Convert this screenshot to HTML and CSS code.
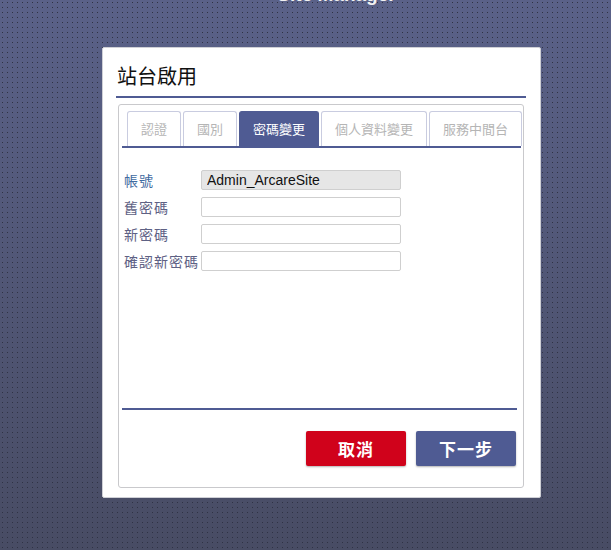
FILE: index.html
```html
<!DOCTYPE html>
<html>
<head>
<meta charset="utf-8">
<link rel="stylesheet" href="styles.css">
</head>
<body>
<div class="brand">Site Manager</div>
<div class="dialog">
  <h1 class="title">站台啟用</h1>
  <div class="panel">
    <div class="tabs">
      <div class="tab">認證</div>
      <div class="tab">國別</div>
      <div class="tab active">密碼變更</div>
      <div class="tab">個人資料變更</div>
      <div class="tab">服務中間台</div>
    </div>
    <div class="form">
      <div class="row"><label class="lbl key">帳號</label><input class="inp ro" value="Admin_ArcareSite" readonly></div>
      <div class="row"><label class="lbl">舊密碼</label><input class="inp" type="password"></div>
      <div class="row"><label class="lbl">新密碼</label><input class="inp" type="password"></div>
      <div class="row"><label class="lbl">確認新密碼</label><input class="inp" type="password"></div>
    </div>
    <div class="actions">
      <button class="btn cancel">取消</button>
      <button class="btn next">下一步</button>
    </div>
  </div>
</div>
</body>
</html>
```

FILE: styles.css
```css
html, body {
  margin: 0;
  padding: 0;
  height: 100%;
}
body {
  font-family: "Noto Sans CJK TC", "Noto Sans", sans-serif;
  background-color: #525878;
  background-image:
    conic-gradient(from 270deg at 1px 1px, #2f3244 90deg, transparent 0),
    linear-gradient(#5a6188, #484c64);
  background-size: 5px 5px, 100% 100%;
  background-position: 2px 2px, 0 0;
  overflow: hidden;
}
.brand {
  font-family: "Liberation Sans", Arial, sans-serif;
  font-weight: bold;
  font-size: 19px;
  line-height: 20px;
  color: #f2f2f2;
  margin-top: -15px;
  height: 62px;
  padding-left: 62px;
  text-align: center;
}
.dialog {
  box-sizing: border-box;
  width: 439px;
  height: 451px;
  margin-left: 102px;
  background: #fff;
  border: 1px solid #cfd0d6;
  border-radius: 2px;
  padding: 14px 14px 0 13px;
  display: flex;
  flex-direction: column;
}
.title {
  margin: 0;
  font-size: 20px;
  font-weight: normal;
  line-height: 28px;
  color: #111;
  padding-left: 1px;
  padding-bottom: 6px;
  border-bottom: 2px solid #4f5b93;
}
.panel {
  margin: 6px 2px 0 2px;
  height: 384px;
  box-sizing: border-box;
  border: 1px solid #c9c9cc;
  border-radius: 3px;
  padding: 6px 1px 0 3px;
  display: flex;
  flex-direction: column;
}
.tabs {
  display: flex;
  gap: 2px;
  padding-left: 5px;
  border-bottom: 2px solid #4f5b93;
  margin-right: 1px;
  height: 35px;
}
.tab {
  height: 35px;
  box-sizing: border-box;
  padding: 0 13px;
  border: 1px solid #c9cce0;
  border-bottom: none;
  border-radius: 3px 3px 0 0;
  font-size: 13px;
  line-height: 33px;
  color: #b5b5b5;
  white-space: nowrap;
  background: #fff;
}
.tab.active {
  background: #4f5b93;
  border-color: #4f5b93;
  color: #fff;
}
.form {
  display: flex;
  flex-direction: column;
  gap: 7px;
  padding: 22px 0 0 2px;
  height: 262px;
  box-sizing: border-box;
  border-bottom: 2px solid #4f5b93;
  margin-right: 5px;
}
.row {
  display: flex;
  align-items: center;
  height: 20px;
}
.lbl {
  width: 77px;
  font-size: 14px;
  color: #5e6184;
  letter-spacing: 1px;
  white-space: nowrap;
}
.lbl.key {
  color: #3f6aa0;
}
.inp {
  box-sizing: border-box;
  width: 200px;
  height: 20px;
  margin: 0;
  border: 1px solid #cfcfcf;
  border-radius: 2px;
  background: #fff;
  padding: 0 5px;
  font-family: "Liberation Sans", Arial, sans-serif;
  font-size: 14px;
  color: #111;
  outline: none;
}
.inp.ro {
  background: #e6e6e6;
}
.actions {
  display: flex;
  justify-content: flex-end;
  gap: 10px;
  padding-top: 21px;
  margin-right: 6px;
}
.btn {
  width: 100px;
  height: 35px;
  border: none;
  border-radius: 2px;
  color: #fff;
  font-family: "Noto Sans CJK TC", sans-serif;
  font-weight: bold;
  font-size: 17px;
  letter-spacing: 1px;
  box-shadow: 0 1px 2px rgba(0,0,0,0.3);
  cursor: pointer;
}
.cancel { background: #d0021b; }
.next { background: #4f5b93; }
```
